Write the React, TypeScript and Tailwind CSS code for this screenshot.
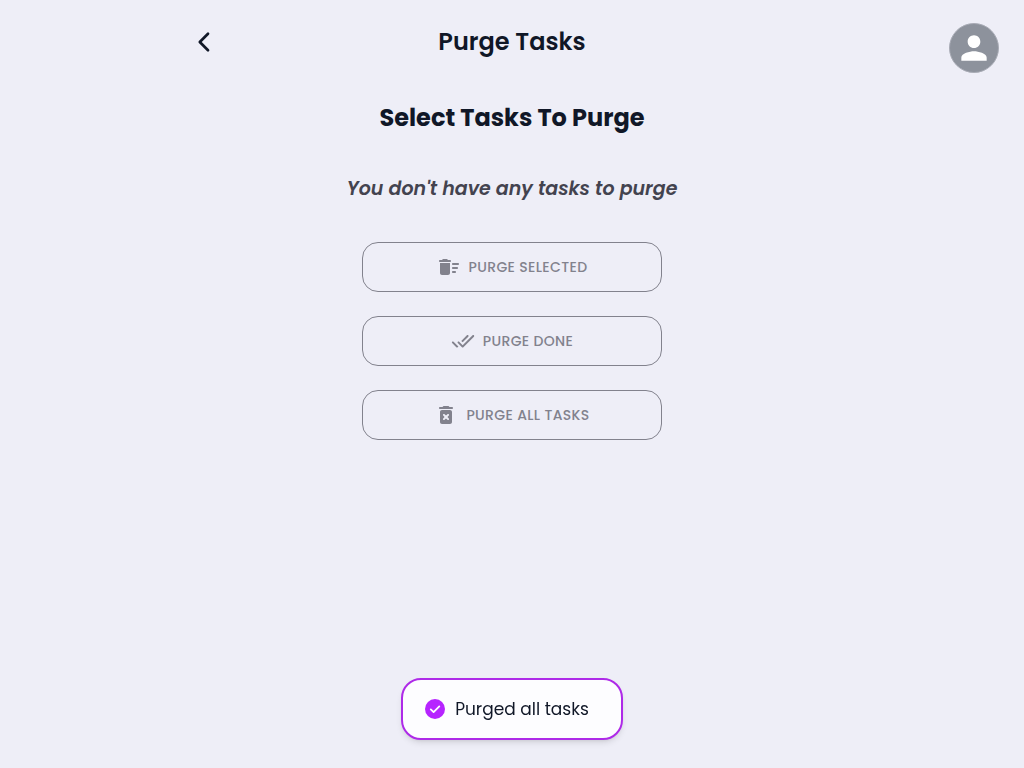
import type { ReactNode } from "react";

function Icon({ d, className }: { d: string; className: string }) {
  return (
    <svg viewBox="0 0 24 24" fill="currentColor" aria-hidden="true" className={className}>
      <path d={d} />
    </svg>
  );
}

const icons = {
  person:
    "M12 12c2.21 0 4-1.79 4-4s-1.79-4-4-4-4 1.79-4 4 1.79 4 4 4zm0 2c-2.67 0-8 1.34-8 4v2h16v-2c0-2.66-5.33-4-8-4z",
  sweep:
    "M16 16h2c.55 0 1 .45 1 1s-.45 1-1 1h-2c-.55 0-1-.45-1-1s.45-1 1-1zm0-8h5c.55 0 1 .45 1 1s-.45 1-1 1h-5c-.55 0-1-.45-1-1s.45-1 1-1zm0 4h4c.55 0 1 .45 1 1s-.45 1-1 1h-4c-.55 0-1-.45-1-1s.45-1 1-1zM3 18c0 1.1.9 2 2 2h6c1.1 0 2-.9 2-2V8H3v10zM13 5h-2l-.71-.71c-.18-.18-.44-.29-.7-.29H6.41c-.26 0-.52.11-.7.29L5 5H3c-.55 0-1 .45-1 1s.45 1 1 1h10c.55 0 1-.45 1-1s-.45-1-1-1z",
  doneAll:
    "M17.3 6.3c-.39-.39-1.02-.39-1.41 0l-5.64 5.64 1.41 1.41L17.3 7.7c.38-.38.38-1.02 0-1.4zm4.24-.01l-9.88 9.88-3.48-3.47c-.39-.39-1.02-.39-1.41 0-.39.39-.39 1.02 0 1.41l4.18 4.18c.39.39 1.02.39 1.41 0L22.95 7.71c.39-.39.39-1.02 0-1.41h-.01c-.38-.4-1.01-.4-1.4-.01zM1.12 14.12L5.3 18.3c.39.39 1.02.39 1.41 0l.7-.7-4.88-4.9c-.39-.39-1.02-.39-1.41 0-.39.39-.39 1.03 0 1.42z",
  deleteForever:
    "M6 19c0 1.1.9 2 2 2h8c1.1 0 2-.9 2-2V9c0-1.1-.9-2-2-2H8c-1.1 0-2 .9-2 2v10zm3.17-7.83c.39-.39 1.02-.39 1.41 0L12 12.59l1.42-1.42c.39-.39 1.02-.39 1.41 0 .39.39.39 1.02 0 1.41L13.41 14l1.42 1.42c.39.39.39 1.02 0 1.41-.39.39-1.02.39-1.41 0L12 15.41l-1.42 1.42c-.39.39-1.02.39-1.41 0-.39-.39-.39-1.02 0-1.41L10.59 14l-1.42-1.42c-.39-.38-.39-1.02 0-1.41zM15.5 4l-.71-.71c-.18-.18-.44-.29-.7-.29H9.91c-.26 0-.52.11-.7.29L8.5 4H6c-.55 0-1 .45-1 1s.45 1 1 1h12c.55 0 1-.45 1-1s-.45-1-1-1h-2.5z",
};

function PurgeButton({ icon, children }: { icon: string; children: ReactNode }) {
  return (
    <button
      type="button"
      disabled
      className="flex h-[50px] w-full items-center justify-center gap-2 rounded-2xl border border-[#82828d] text-sm font-medium tracking-wide text-[#82828d] uppercase"
    >
      <Icon d={icon} className="size-6" />
      {children}
    </button>
  );
}

export default function App() {
  return (
    <div className="min-h-screen bg-[#eeeef7] font-['Poppins','Inter',sans-serif] text-[#101727]">
      <header className="relative mx-auto flex h-[84px] w-[63%] items-center justify-center">
        <button type="button" aria-label="Back" className="absolute left-0 p-[3px]">
          <svg
            viewBox="0 0 24 24"
            fill="none"
            stroke="currentColor"
            strokeWidth="2.7"
            strokeLinecap="round"
            strokeLinejoin="round"
            aria-hidden="true"
            className="size-6"
          >
            <path d="M16 3.8L7.8 12l8.2 8.2" />
          </svg>
        </button>
        <h1 className="text-2xl font-semibold">Purge Tasks</h1>
      </header>
      <button
        type="button"
        aria-label="Account"
        className="fixed top-[23px] right-[25px] flex size-[50px] items-center justify-center rounded-full border border-[#a8abb5] bg-[#8d929c] text-white"
      >
        <Icon d={icons.person} className="size-[38px]" />
      </button>

      <main className="flex flex-col items-center px-4 pt-4 text-center">
        <h2 className="text-2xl leading-9 font-bold">Select Tasks To Purge</h2>
        <p className="mt-9 text-[19px] leading-[34px] font-semibold text-[#43434f] italic">
          You don't have any tasks to purge
        </p>
        <div className="mt-9 flex w-full max-w-[300px] flex-col gap-6">
          <PurgeButton icon={icons.sweep}>Purge selected</PurgeButton>
          <PurgeButton icon={icons.doneAll}>Purge done</PurgeButton>
          <PurgeButton icon={icons.deleteForever}>Purge all tasks</PurgeButton>
        </div>
      </main>

      <div className="pointer-events-none fixed inset-x-0 bottom-7 flex justify-center">
        <div
          role="status"
          className="flex h-[62px] items-center gap-2.5 rounded-[20px] border-2 border-[#ae2ae8] bg-[#fdfdff] pr-8 pl-[22px] text-[17px] leading-7 shadow-md"
        >
          <svg viewBox="0 0 20 20" aria-hidden="true" className="size-5">
            <circle cx="10" cy="10" r="10" fill="#b624ff" />
            <path
              d="M5.8 10.4l2.8 2.7 5.7-5.7"
              fill="none"
              stroke="#fff"
              strokeWidth="1.8"
              strokeLinecap="round"
              strokeLinejoin="round"
            />
          </svg>
          Purged all tasks
        </div>
      </div>
    </div>
  );
}
